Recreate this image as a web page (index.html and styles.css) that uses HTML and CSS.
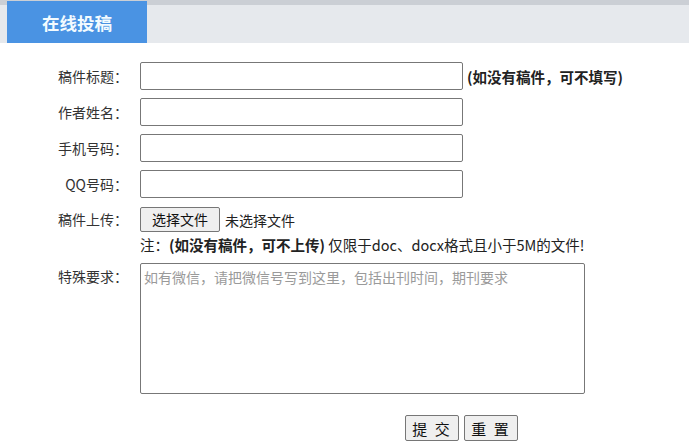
FILE: index.html
```html
<!DOCTYPE html>
<html lang="zh-CN">
<head>
<meta charset="utf-8">
<title>在线投稿</title>
<link rel="stylesheet" href="styles.css">
</head>
<body>
<div class="tabbar">
  <div class="tab">在线投稿</div>
</div>

<form class="form" onsubmit="return false">
  <label class="lbl">稿件标题：</label>
  <div class="field">
    <input class="txt" type="text">
    <span class="hint">(如没有稿件，可不填写)</span>
  </div>

  <label class="lbl">作者姓名：</label>
  <div class="field"><input class="txt" type="text"></div>

  <label class="lbl">手机号码：</label>
  <div class="field"><input class="txt" type="text"></div>

  <label class="lbl">QQ号码：</label>
  <div class="field"><input class="txt" type="text"></div>

  <label class="lbl lbl-top">稿件上传：</label>
  <div class="field stack">
    <div class="file">
      <span class="file-btn">选择文件</span>
      <span class="file-name">未选择文件</span>
    </div>
    <div class="note">注：<b>(如没有稿件，可不上传)</b> 仅限于doc、docx格式且小于5M的文件!</div>
  </div>

  <label class="lbl lbl-area">特殊要求：</label>
  <div class="field"><textarea class="area" placeholder="如有微信，请把微信号写到这里，包括出刊时间，期刊要求"></textarea></div>

  <div></div>
  <div class="actions">
    <button class="btn" type="submit">提 交</button>
    <button class="btn" type="reset">重 置</button>
  </div>
</form>
</body>
</html>
```

FILE: styles.css
```css
* { box-sizing: border-box; }

html, body {
  margin: 0;
  background: #fff;
  font-family: "Noto Sans CJK SC", "Noto Sans", sans-serif;
  font-size: 14px;
  color: #333;
}

/* top tab strip */
.tabbar {
  height: 43px;
  background: #e6e9ed;
  border-top: 5px solid #cbcfd5;
  padding-left: 7px;
  display: flex;
}
.tab {
  width: 140px;
  height: 42px;
  margin-top: -4px;
  background: #4a93e3;
  color: #f3fbff;
  font-size: 17.5px;
  font-weight: bold;
  display: flex;
  align-items: center;
  justify-content: center;
}

/* form grid */
.form {
  display: grid;
  grid-template-columns: 128px 1fr;
  column-gap: 12px;
  row-gap: 8px;
  padding-top: 19px;
}
.lbl {
  text-align: right;
  align-self: center;
  line-height: 20px;
  color: #333;
}
.lbl-top {
  align-self: start;
  line-height: 24px;
  padding-top: 1px;
}
.lbl-area {
  align-self: start;
  padding-top: 3px;
}

.field {
  display: flex;
  align-items: center;
}
.stack {
  flex-direction: column;
  align-items: flex-start;
  gap: 3px;
}

.txt {
  width: 323px;
  height: 28px;
  border: 1px solid #777;
  border-radius: 2px;
  background: #fff;
  padding: 0 4px;
  font: inherit;
}
.hint {
  margin-left: 4px;
  font-weight: bold;
  font-size: 14.5px;
  color: #222;
}

.file {
  display: flex;
  align-items: center;
  gap: 5px;
  margin-top: 1px;
}
.file-btn {
  display: inline-block;
  height: 25px;
  line-height: 23px;
  padding: 0 11px;
  border: 1px solid #767676;
  border-radius: 2px;
  background: #efefef;
  color: #111;
}
.file-name { color: #222; }

.note {
  line-height: 20px;
  font-size: 14.5px;
  color: #222;
}
.note b { color: #222; }

.area {
  width: 445px;
  height: 131px;
  border: 1px solid #777;
  border-radius: 2px;
  padding: 3px 3px;
  font: inherit;
  line-height: 20px;
  resize: none;
  color: #333;
}
.area::placeholder { color: #9a9a9a; }

.actions {
  display: flex;
  gap: 5px;
  padding-left: 265px;
  margin-top: 13px;
}
.btn {
  height: 26px;
  width: 54px;
  padding: 0;
  border: 1px solid #767676;
  border-radius: 2px;
  background: #efefef;
  font: inherit;
  font-size: 15px;
  color: #111;
  letter-spacing: 2px;
}
```
